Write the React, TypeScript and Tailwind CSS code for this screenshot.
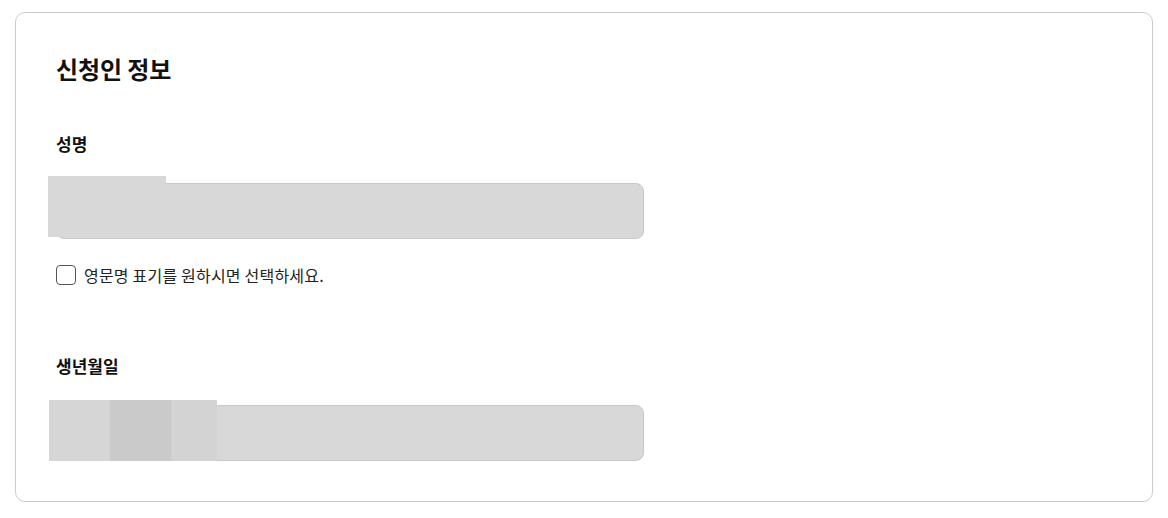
export default function App() {
  return (
    <div className="bg-white w-[1168px] h-[518px] px-[15px] pt-[12px] font-['Noto_Sans_CJK_KR','Noto_Sans',sans-serif] text-[#111]">
      <div className="border border-[#cccccc] rounded-[10px] h-[490px] px-[40px] pt-[41px]">
        {/* 신청인 정보 */}
        <h2 className="text-[24px] font-bold leading-[30px] tracking-[-0.1px]">신청인 정보</h2>

        {/* 성명 */}
        <div className="mt-[48px]">
          <label className="block text-[17px] font-bold leading-[24px]">성명</label>
          <div className="relative mt-[27px]">
            <input
              className="block w-[588px] h-[56px] rounded-[8px] border border-[#c8c8c8] bg-[#d8d8d8]"
              readOnly
            />
            <div className="absolute left-[-8px] top-[-7px] w-[118px] h-[61px] bg-[#d8d8d8]" />
          </div>
          <label className="flex items-center gap-[8px] mt-[25px]">
            <span className="w-[20px] h-[20px] rounded-[4px] border border-[#555] bg-white" />
            <span className="text-[16px] leading-[22px] tracking-[0.2px] text-[#222]">영문명 표기를 원하시면 선택하세요.</span>
          </label>
        </div>

        {/* 생년월일 */}
        <div className="mt-[68px]">
          <label className="block text-[17px] font-bold leading-[24px]">생년월일</label>
          <div className="relative mt-[27px]">
            <input
              className="block w-[588px] h-[56px] rounded-[8px] border border-[#c8c8c8] bg-[#d8d8d8]"
              readOnly
            />
            <div className="absolute left-[-7px] top-[-5px] h-[61px] flex">
              <div className="w-[61px] bg-[#d6d6d6]" />
              <div className="w-[61px] bg-[#cacaca]" />
              <div className="w-[46px] bg-[#d3d3d3]" />
            </div>
          </div>
        </div>
      </div>
    </div>
  );
}
